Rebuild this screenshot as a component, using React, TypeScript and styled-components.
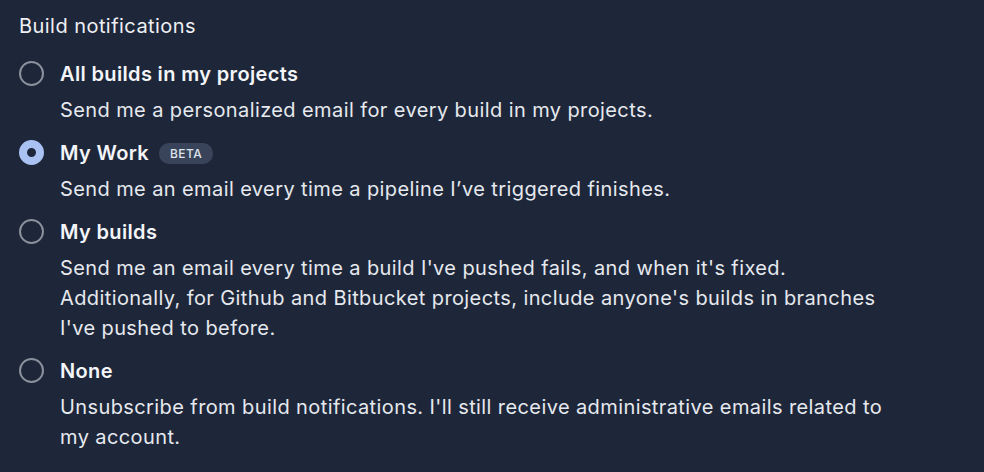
import React from 'react';
import styled, { createGlobalStyle } from 'styled-components';

const GlobalStyle = createGlobalStyle`
  html, body {
    margin: 0;
    padding: 0;
    background: #1e273a;
  }
  body {
    font-family: Inter, "Noto Sans", sans-serif;
    color: #eef0f4;
  }
`;

const Panel = styled.section`
  padding: 13px 19px;
`;

const Heading = styled.h2`
  margin: 0 0 19px;
  font-size: 20px;
  font-weight: 400;
  letter-spacing: 0.45px;
  line-height: 26px;
  color: #eef0f4;
`;

const OptionList = styled.div`
  display: flex;
  flex-direction: column;
  gap: 12px;
`;

const Option = styled.label`
  display: grid;
  grid-template-columns: 24px 1fr;
  column-gap: 17px;
  cursor: pointer;
`;

const Radio = styled.span<{ $checked: boolean }>`
  box-sizing: border-box;
  width: 25px;
  height: 25px;
  margin-top: 3px;
  border-radius: 50%;
  border: ${(p) => (p.$checked ? '8.5px solid #a9c2f3' : '2px solid #8b919c')};
  background: ${(p) => (p.$checked ? '#1e273a' : 'transparent')};
`;

const Body = styled.div`
  display: flex;
  flex-direction: column;
  gap: 5px;
`;

const TitleRow = styled.div`
  display: flex;
  align-items: center;
  gap: 10px;
  line-height: 32px;
`;

const Title = styled.span`
  font-size: 20px;
  font-weight: 600;
  letter-spacing: 0.35px;
  color: #f4f5f8;
`;

const Badge = styled.span`
  font-size: 12px;
  font-weight: 500;
  letter-spacing: 0.4px;
  line-height: 21px;
  padding: 0 11px;
  border-radius: 10px;
  background: #39435a;
  color: #dfe3ea;
`;

const Description = styled.p`
  margin: 0;
  max-width: 830px;
  font-size: 20px;
  letter-spacing: 0.4px;
  line-height: 30px;
  color: #e6e9ee;
`;

type Choice = {
  id: string;
  title: string;
  badge?: string;
  description: string;
};

const choices: Choice[] = [
  {
    id: 'all',
    title: 'All builds in my projects',
    description: 'Send me a personalized email for every build in my projects.',
  },
  {
    id: 'work',
    title: 'My Work',
    badge: 'BETA',
    description: 'Send me an email every time a pipeline I\u2019ve triggered finishes.',
  },
  {
    id: 'mine',
    title: 'My builds',
    description:
      "Send me an email every time a build I've pushed fails, and when it's fixed. Additionally, for Github and Bitbucket projects, include anyone's builds in branches I've pushed to before.",
  },
  {
    id: 'none',
    title: 'None',
    description:
      "Unsubscribe from build notifications. I'll still receive administrative emails related to my account.",
  },
];

const App: React.FC = () => {
  const [selected, setSelected] = React.useState('work');

  return (
    <>
      <GlobalStyle />
      <Panel>
        <Heading>Build notifications</Heading>
        <OptionList>
          {choices.map((c) => (
            <Option key={c.id} onClick={() => setSelected(c.id)}>
              <Radio $checked={selected === c.id} />
              <Body>
                <TitleRow>
                  <Title>{c.title}</Title>
                  {c.badge && <Badge>{c.badge}</Badge>}
                </TitleRow>
                <Description>{c.description}</Description>
              </Body>
            </Option>
          ))}
        </OptionList>
      </Panel>
    </>
  );
};

export default App;
